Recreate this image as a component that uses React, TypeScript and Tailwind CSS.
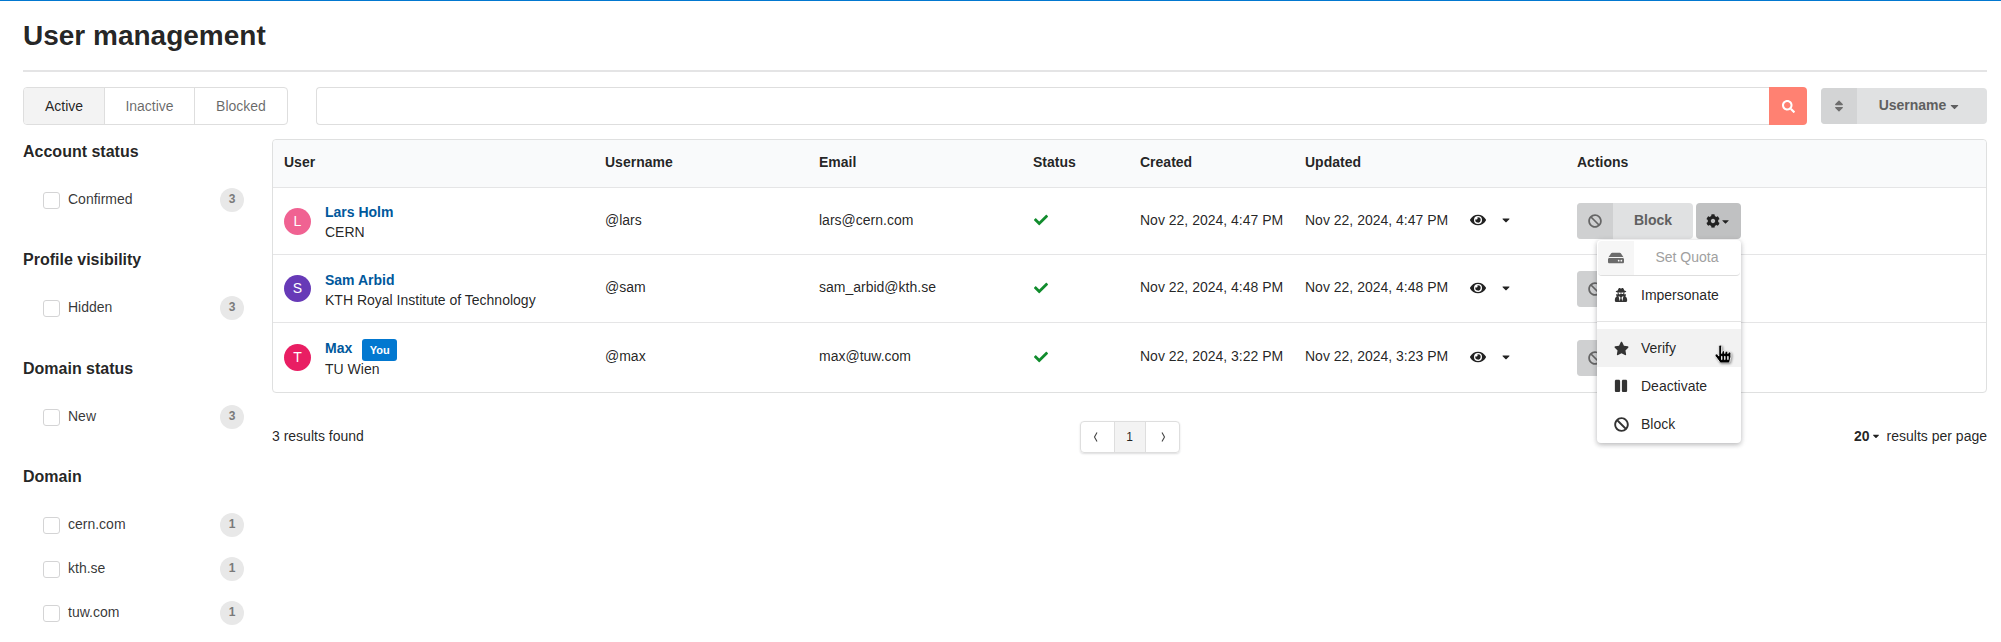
import type { ReactNode } from 'react';
import {
  FaBan,
  FaCaretDown,
  FaCheck,
  FaCog,
  FaEye,
  FaHandPointer,
  FaHdd,
  FaPause,
  FaSearch,
  FaSort,
  FaStar,
  FaUserSecret,
} from 'react-icons/fa';

const COLUMNS = 'grid grid-cols-[321px_214px_214px_107px_165px_165px_107px_1fr] items-center pl-[11px]';

const FILTERS = [
  { title: 'Account status', gap: 'mb-[38px]', items: [{ label: 'Confirmed', count: 3 }] },
  { title: 'Profile visibility', gap: 'mb-[39px]', items: [{ label: 'Hidden', count: 3 }] },
  { title: 'Domain status', gap: 'mb-[38px]', items: [{ label: 'New', count: 3 }] },
  {
    title: 'Domain',
    gap: '',
    items: [
      { label: 'cern.com', count: 1 },
      { label: 'kth.se', count: 1 },
      { label: 'tuw.com', count: 1 },
    ],
  },
];

const USERS = [
  {
    name: 'Lars Holm',
    org: 'CERN',
    initial: 'L',
    avatar: 'bg-[#f06292]',
    username: '@lars',
    email: 'lars@cern.com',
    created: 'Nov 22, 2024, 4:47 PM',
    updated: 'Nov 22, 2024, 4:47 PM',
    height: 'h-[67px]',
    menu: true,
  },
  {
    name: 'Sam Arbid',
    org: 'KTH Royal Institute of Technology',
    initial: 'S',
    avatar: 'bg-[#673ab7]',
    username: '@sam',
    email: 'sam_arbid@kth.se',
    created: 'Nov 22, 2024, 4:48 PM',
    updated: 'Nov 22, 2024, 4:48 PM',
    height: 'h-[68px]',
    menu: false,
  },
  {
    name: 'Max',
    org: 'TU Wien',
    initial: 'T',
    avatar: 'bg-[#e91e63]',
    username: '@max',
    email: 'max@tuw.com',
    created: 'Nov 22, 2024, 3:22 PM',
    updated: 'Nov 22, 2024, 3:23 PM',
    height: 'h-[70px]',
    you: true,
    menu: false,
  },
];

function FilterGroup({ title, gap, items }: (typeof FILTERS)[number]) {
  return (
    <div className={gap}>
      <h3 className="text-[16px] leading-[20px] font-bold">{title}</h3>
      <div className="mt-[26px] flex flex-col gap-[20px]">
        {items.map((item) => (
          <div key={item.label} className="flex h-[24px] items-center pl-[20px]">
            <span className="size-[17px] rounded-[3px] border border-[#d4d4d5] bg-white" />
            <span className="ml-[8px] flex-1 -translate-y-[1px] text-[rgba(0,0,0,0.8)]">{item.label}</span>
            <span className="flex size-[24px] items-center justify-center rounded-full bg-[#e8e8e8] pb-[2px] text-[12px] font-bold text-[#7a7a7a]">
              {item.count}
            </span>
          </div>
        ))}
      </div>
    </div>
  );
}

function MenuItem({ icon, children, hover }: { icon: ReactNode; children: ReactNode; hover?: boolean }) {
  return (
    <div className={`relative flex h-[38px] items-center text-[14px] text-[rgba(0,0,0,0.87)] ${hover ? 'bg-[#f2f2f2]' : ''}`}>
      <span className="flex w-[44px] justify-center pl-[4px] text-[#333]">{icon}</span>
      <span>{children}</span>
      {hover && (
        <FaHandPointer
          size={18}
          className="absolute top-[16px] left-[117px] fill-black stroke-white stroke-[24px] drop-shadow-[1px_1px_1px_rgba(0,0,0,0.4)]"
        />
      )}
    </div>
  );
}

function ActionsMenu() {
  return (
    <div className="absolute top-[37px] right-0 z-10 w-[144px] rounded-[4px] bg-white shadow-[0_2px_4px_rgba(34,36,38,0.2),0_1px_6px_rgba(34,36,38,0.15)]">
      <div className="mx-[1px] mt-[1px] flex h-[35px] items-stretch rounded-[4px] border-b border-[#dedede] text-[#a0a0a0]">
        <span className="flex w-[36px] items-center justify-center rounded-l-[4px] bg-[#f6f6f6] text-[#6b6b6b]">
          <FaHdd size={16} />
        </span>
        <span className="flex flex-1 -translate-y-[1px] items-center justify-center">Set Quota</span>
      </div>
      <MenuItem icon={<FaUserSecret size={14} />}>Impersonate</MenuItem>
      <div className="my-[7px] h-[1px] bg-[#e4e4e4]" />
      <MenuItem icon={<FaStar size={15} />} hover>
        Verify
      </MenuItem>
      <MenuItem icon={<FaPause size={14} />}>Deactivate</MenuItem>
      <MenuItem icon={<FaBan size={15} />}>Block</MenuItem>
    </div>
  );
}

function UserRow({ user }: { user: (typeof USERS)[number] }) {
  return (
    <div className={`${COLUMNS} ${user.height} border-t border-[#e5e5e6]`}>
      <div className="flex items-center">
        <span className={`flex size-[27px] items-center justify-center rounded-full text-[14px] text-white ${user.avatar}`}>
          {user.initial}
        </span>
        <div className="ml-[14px] pt-[2px] leading-[20px]">
          <div className="flex h-[20px] items-center">
            <span className="font-bold text-[#00589c]">{user.name}</span>
            {user.you && (
              <span className="ml-[10px] flex h-[22px] w-[35px] translate-y-[2px] items-center justify-center rounded-[3px] bg-[#0278d0] text-[11px] font-bold text-white">
                You
              </span>
            )}
          </div>
          <div className={user.you ? 'mt-[1px]' : ''}>{user.org}</div>
        </div>
      </div>
      <div className="-translate-y-[1px]">{user.username}</div>
      <div className="-translate-y-[1px]">{user.email}</div>
      <FaCheck size={14} className="ml-[1px] -translate-y-[1px] text-[#118c2d]" />
      <div className="-translate-y-[1px]">{user.created}</div>
      <div className="-translate-y-[1px]">{user.updated}</div>
      <div className="flex -translate-y-[1px] items-center text-[#222]">
        <FaEye size={16} />
        <FaCaretDown size={12} className="ml-[14px]" />
      </div>
      <div className="flex items-center gap-[3px]">
        <div className="flex h-[36px] w-[116px] overflow-hidden rounded-[4px] bg-[#e0e1e2] font-bold text-[#5f5f60]">
          <span className="flex w-[36px] items-center justify-center bg-[#cfd0d1]">
            <FaBan size={14} className="text-[#666]" />
          </span>
          {/* the label of the lower rows sits under the open menu */}
          {user.menu && <span className="flex flex-1 -translate-y-[1px] items-center justify-center">Block</span>}
        </div>
        <div className="relative">
          <div className="flex h-[36px] w-[45px] items-center justify-center rounded-[4px] bg-[#c0c1c2] text-[#222]">
            <FaCog size={14} />
            <FaCaretDown size={11} />
          </div>
          {user.menu && <ActionsMenu />}
        </div>
      </div>
    </div>
  );
}

function PageArrow({ d, className }: { d: string; className: string }) {
  return (
    <span className={`flex w-[33px] items-center justify-center ${className}`}>
      <svg width="5" height="10" viewBox="0 0 5 10" fill="none">
        <path d={d} stroke="#444" strokeWidth="1.1" />
      </svg>
    </span>
  );
}

export default function App() {
  return (
    <div className="h-[642px] w-full overflow-hidden border-t border-[#0278d0] bg-white pr-[14px] pl-[23px] font-['Liberation_Sans',Arial,sans-serif] text-[14px] text-[rgba(0,0,0,0.87)]">
      <div className="flex h-[71px] items-center border-b-2 border-[#e4e4e5]">
        <h1 className="text-[28px] leading-[36px] font-bold">User management</h1>
      </div>

      <div className="mt-[15px] flex h-[38px]">
        <div className="flex w-[265px] overflow-hidden rounded-[4px] border border-[#dedede] text-[rgba(0,0,0,0.6)]">
          <div className="flex w-[80px] items-center justify-center bg-[#f3f3f3] text-[rgba(0,0,0,0.87)]">Active</div>
          <div className="flex w-[91px] items-center justify-center border-x border-[#dedede]">Inactive</div>
          <div className="flex flex-1 items-center justify-center">Blocked</div>
        </div>
        <div className="ml-[28px] flex flex-1">
          <div className="flex-1 rounded-l-[4px] border border-r-0 border-[#dedede]" />
          <div className="flex w-[38px] items-center justify-center rounded-r-[4px] bg-[#ff8172] text-white">
            <FaSearch size={13} />
          </div>
        </div>
        <div className="my-[1px] ml-[14px] flex w-[166px] overflow-hidden rounded-[4px] bg-[#e0e1e2] font-bold text-[#5f5f60]">
          <span className="flex w-[36px] items-center justify-center bg-[#d3d4d5]">
            <FaSort size={14} className="text-[#6e6e6e]" />
          </span>
          <span className="flex flex-1 items-center justify-center pr-[4px]">
            <span className="-translate-y-[1px]">Username</span>
            <FaCaretDown size={13} className="ml-[2px]" />
          </span>
        </div>
      </div>

      <div className="mt-[14px] flex">
        <aside className="mt-[3px] mr-[28px] w-[221px] shrink-0">
          {FILTERS.map((group) => (
            <FilterGroup key={group.title} {...group} />
          ))}
        </aside>

        <main className="flex-1">
          <div className="rounded-[4px] border border-[#dfe0e0]">
            <div className={`${COLUMNS} h-[47px] rounded-t-[4px] bg-[#f9fafb] pb-[2px] font-bold`}>
              <div>User</div>
              <div>Username</div>
              <div>Email</div>
              <div>Status</div>
              <div>Created</div>
              <div>Updated</div>
              <div />
              <div>Actions</div>
            </div>
            {USERS.map((user) => (
              <UserRow key={user.username} user={user} />
            ))}
          </div>

          <div className="mt-[28px] grid h-[32px] grid-cols-[1fr_auto_1fr] items-center">
            <div className="-translate-y-[1px]">3 results found</div>
            <div className="flex h-[32px] w-[100px] rounded-[4px] border border-[#dedede] shadow-[0_1px_2px_rgba(34,36,38,0.15)]">
              <PageArrow d="M4 0.5 L1.5 5 L4 9.5" className="pr-[3px]" />
              <span className="flex flex-1 items-center justify-center border-x border-[#dedede] bg-[#f3f3f3] text-[12px]">1</span>
              <PageArrow d="M1 0.5 L3.5 5 L1 9.5" className="pl-[3px]" />
            </div>
            <div className="flex -translate-y-[1px] items-center justify-end">
              <b>20</b>
              <FaCaretDown size={10} className="mr-[6px] ml-[1px]" />
              results per page
            </div>
          </div>
        </main>
      </div>
    </div>
  );
}
